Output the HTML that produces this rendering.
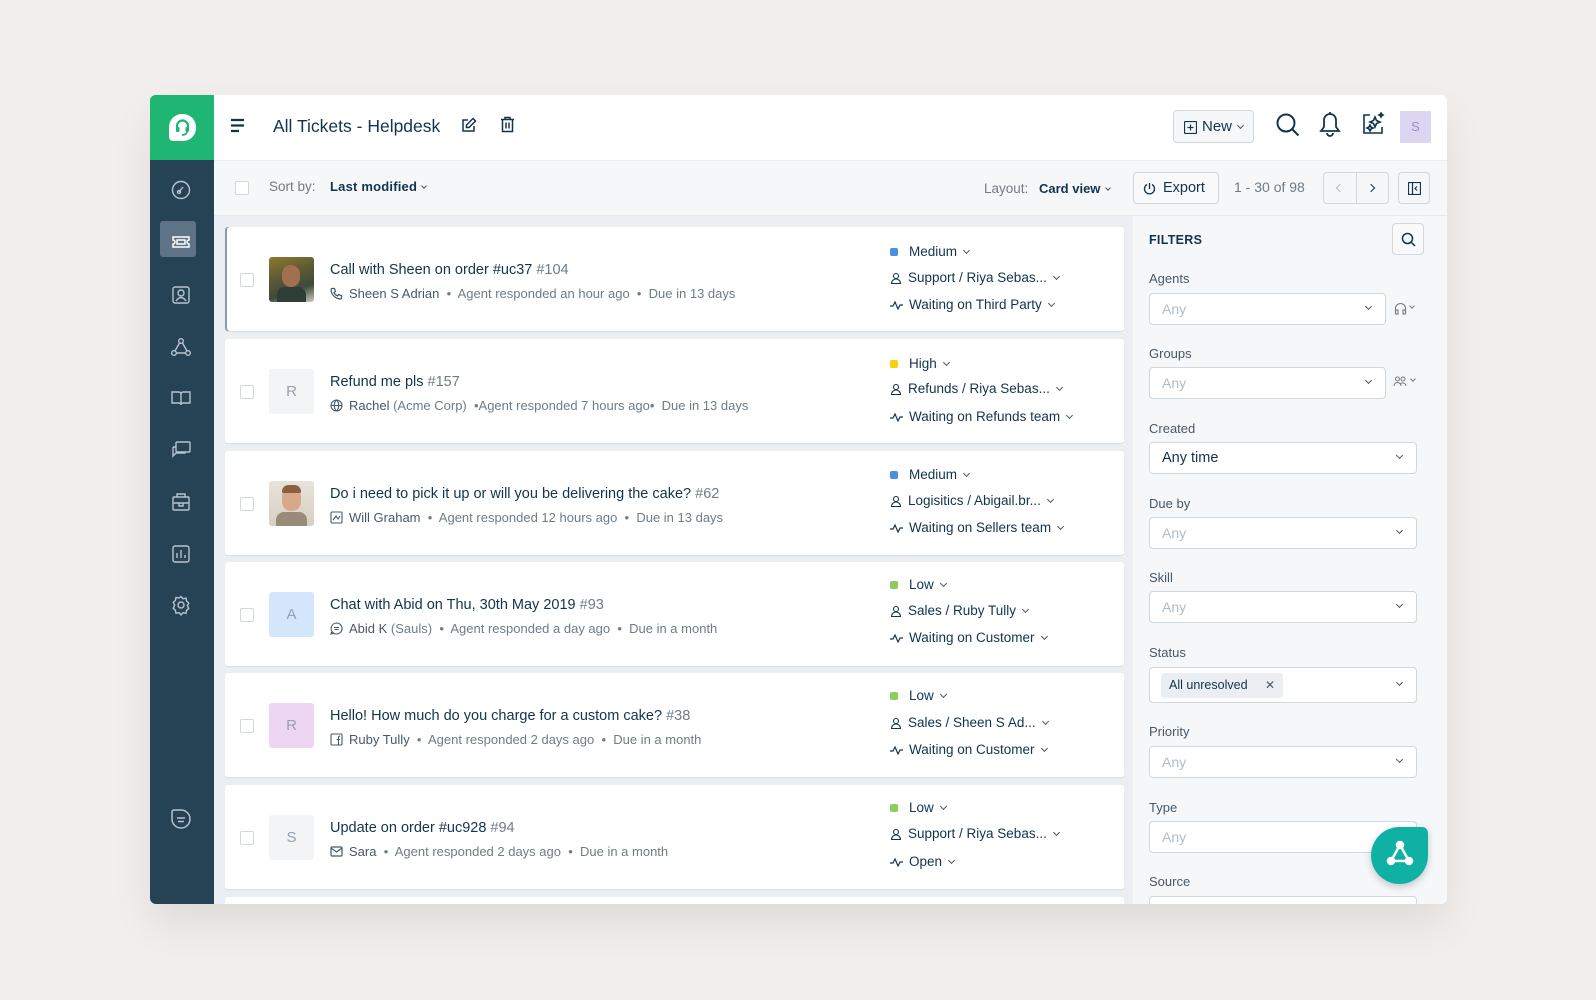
<!DOCTYPE html>
<html><head><meta charset="utf-8"><style>
*{box-sizing:border-box;margin:0;padding:0}
body{width:1596px;height:1000px;background:#f1eeeb;font-family:"Liberation Sans",sans-serif;position:relative;overflow:hidden;color:#12344d}
.abs{position:absolute}
#app{position:absolute;left:150px;top:95px;width:1297px;height:809px;background:#fff;border-radius:6px;overflow:hidden;box-shadow:0 20px 40px rgba(0,0,0,.08)}
.side{position:absolute;left:0;top:0;width:64px;height:809px;background:#264356}
.logo{position:absolute;left:0;top:0;width:64px;height:65px;background:#1fb572}
.si{position:absolute;left:20px;width:22px;height:22px}
.tb{position:absolute;left:64px;top:65px;right:0;height:56px;background:#f5f7f9;border-bottom:1px solid #e4e9ee;border-top:1px solid #ebeff3}
.list{position:absolute;left:64px;top:121px;width:919px;bottom:0;background:#ebeff3}
.card{position:absolute;left:11px;width:899px;height:104px;background:#fff;border-radius:3px;box-shadow:0 1px 1px rgba(0,0,0,.08)}
.cb{position:absolute;left:15px;top:46px;width:14px;height:14px;border:1px solid #cfd7df;border-radius:2px;background:#fff}
.av{position:absolute;left:44px;top:30px;width:45px;height:45px;border-radius:3px;font-size:15px;color:#92a2b1;text-align:center;line-height:45px;overflow:hidden}
.tt{position:absolute;left:105px;top:35px;font-size:14.5px;color:#12344d;white-space:nowrap}
.tt span{color:#6f7c87}
.mt{position:absolute;left:105px;top:59px;font-size:13px;color:#6f7c87;white-space:nowrap}
.mt b{font-weight:normal;color:#475867}
.mt svg{vertical-align:-2px;margin-right:6px}
.rc{position:absolute;left:676px;font-size:13.5px;color:#12344d;white-space:nowrap}
.dot{display:inline-block;width:8px;height:8px;border-radius:2px;margin-right:11px}
.chev{display:inline-block;width:5px;height:5px;border-right:1.3px solid #475867;border-bottom:1.3px solid #475867;transform:rotate(45deg);margin-left:7px;vertical-align:3px}
.rc svg{vertical-align:-2px;margin-right:6px}
.fp{position:absolute;left:983px;top:121px;right:0;bottom:0;background:#f5f7f9}
.lab{position:absolute;left:16px;font-size:13px;color:#475867}
.inp{position:absolute;left:16px;width:268px;height:32px;background:#fff;border:1px solid #cfd7df;border-radius:4px;font-size:14px;color:#b0bbc5;padding-left:12px;line-height:30px}
.inp .chev{position:absolute;right:14px;top:10px;margin:0}
.btn{position:absolute;background:#f5f7f9;border:1px solid #cfd7df;border-radius:4px}
</style></head><body>
<div id="app">
<div class="side">
 <div class="logo"><div class="abs" style="left:19px;top:19px;width:27px;height:27px;background:#fff;border-radius:13px 13px 13px 4px"></div>
 <svg class="abs" style="left:23px;top:22px" width="19" height="20" viewBox="0 0 19 20"><path d="M4 12V9a5.5 5.5 0 0 1 11 0v3" fill="none" stroke="#1fb572" stroke-width="2.2"/><rect x="3" y="10" width="3.5" height="5" rx="1" fill="#1fb572"/><rect x="12.5" y="10" width="3.5" height="5" rx="1" fill="#1fb572"/><path d="M14 15q-1 3-5 3" fill="none" stroke="#1fb572" stroke-width="1.8"/></svg></div>
 <div class="abs" style="left:10px;top:126px;width:36px;height:36px;background:#5e7385;border-radius:3px"></div>
 <svg class="si" style="top:84px" viewBox="0 0 22 22" fill="none" stroke="#b7c3cd" stroke-width="1.4"><circle cx="11" cy="11" r="8.5"/><path d="M9 13l4-5"/><circle cx="9" cy="13" r="1.5"/></svg>
 <svg class="si" style="top:136px" viewBox="0 0 22 22" fill="none" stroke="#fff" stroke-width="1.5"><path d="M3 6h16v3a2 2 0 0 0 0 4v3H3v-3a2 2 0 0 0 0-4z"/><rect x="7" y="9" width="8" height="4"/></svg>
 <svg class="si" style="top:189px" viewBox="0 0 22 22" fill="none" stroke="#b7c3cd" stroke-width="1.4"><rect x="3" y="3" width="16" height="16" rx="2"/><circle cx="11" cy="9" r="3"/><path d="M6 17q5-7 10 0"/></svg>
 <svg class="si" style="top:241px" viewBox="0 0 22 22" fill="none" stroke="#b7c3cd" stroke-width="1.4"><circle cx="11" cy="5" r="2.3"/><circle cx="4" cy="17" r="2.3"/><circle cx="18" cy="17" r="2.3"/><path d="M9.5 7L5 15M12.5 7L17 15M6.5 17h9"/></svg>
 <svg class="si" style="top:292px" viewBox="0 0 22 22" fill="none" stroke="#b7c3cd" stroke-width="1.4"><path d="M2 5h7a2 2 0 0 1 2 2v11a2 2 0 0 0-2-2H2zM20 5h-7a2 2 0 0 0-2 2v11a2 2 0 0 1 2-2h7z"/></svg>
 <svg class="si" style="top:344px" viewBox="0 0 22 22" fill="none" stroke="#b7c3cd" stroke-width="1.4"><rect x="6" y="3" width="14" height="10" rx="1"/><path d="M3 8h3M3 8v9l3-3h9v-1"/></svg>
 <svg class="si" style="top:396px" viewBox="0 0 22 22" fill="none" stroke="#b7c3cd" stroke-width="1.4"><rect x="3" y="6" width="16" height="13" rx="1"/><path d="M7 6V3h8v3M3 12h16M9 12v3h4v-3"/></svg>
 <svg class="si" style="top:448px" viewBox="0 0 22 22" fill="none" stroke="#b7c3cd" stroke-width="1.4"><rect x="3" y="3" width="16" height="16" rx="2"/><path d="M7 15V10M11 15V7M15 15v-3"/></svg>
 <svg class="si" style="top:499px" viewBox="0 0 22 22" fill="none" stroke="#b7c3cd" stroke-width="1.4"><circle cx="11" cy="11" r="3"/><path d="M11 2.5l2 2.2 3-.6.6 3 2.2 2-1.5 2.6 1.5 2.6-2.2 2-.6 3-3-.6-2 2.2-2-2.2-3 .6-.6-3-2.2-2L4.7 11 3.2 8.4l2.2-2 .6-3 3 .6z"/></svg>
 <svg class="si" style="top:713px" viewBox="0 0 22 22" fill="none" stroke="#b7c3cd" stroke-width="1.5"><path d="M11 2a9 9 0 1 1-9 9V4a2 2 0 0 1 2-2z"/><path d="M7 10h8M8 13.5h6"/></svg>
</div>
<svg class="abs" style="left:80px;top:23px" width="16" height="16" viewBox="0 0 16 16" stroke="#12344d" stroke-width="2.2"><path d="M1 2h13M1 7.5h13M1 13h8"/></svg>
<div class="abs" style="left:123px;top:21px;font-size:17.5px;color:#12344d">All Tickets - Helpdesk</div>
<svg class="abs" style="left:311px;top:22px" width="16" height="16" viewBox="0 0 16 16" fill="none" stroke="#12344d" stroke-width="1.5"><path d="M13 9v5H2V3h5"/><path d="M12 1.5l2.5 2.5L8 10.5H5.5V8z"/></svg>
<svg class="abs" style="left:350px;top:21px" width="15" height="17" viewBox="0 0 15 17" fill="none" stroke="#12344d" stroke-width="1.5"><path d="M1 3.5h13M5 3.5V1.5h5v2M2.5 3.5v12h10v-12M6 6.5v6M9 6.5v6"/></svg>
<div class="btn" style="left:1023px;top:15px;width:81px;height:33px;background:#f5f7f9"><svg class="abs" style="left:10px;top:10px" width="13" height="13" viewBox="0 0 13 13" fill="none" stroke="#12344d" stroke-width="1.2"><rect x=".5" y=".5" width="12" height="12" rx="1"/><path d="M6.5 3.5v6M3.5 6.5h6"/></svg><span class="abs" style="left:28px;top:7px;font-size:15px">New</span><span class="chev abs" style="left:57px;top:12px"></span></div>
<svg class="abs" style="left:1125px;top:17px" width="26" height="26" viewBox="0 0 26 26" fill="none" stroke="#12344d" stroke-width="2"><circle cx="11" cy="11" r="8.5"/><path d="M17.5 17.5l6 6"/></svg>
<svg class="abs" style="left:1169px;top:16px" width="22" height="28" viewBox="0 0 22 28" fill="none" stroke="#12344d" stroke-width="1.8"><path d="M11 3a6 6 0 0 1 6 6v7l3 4H2l3-4V9a6 6 0 0 1 6-6zM8 22a3 3 0 0 0 6 0M11 1v2"/></svg>
<svg class="abs" style="left:1211px;top:17px" width="24" height="24" viewBox="0 0 24 24" fill="none" stroke="#12344d" stroke-width="1.6"><path d="M9 3H3v18h18v-6"/><path d="M14 5l1.5 3.5L19 10l-3.5 1.5L14 15l-1.5-3.5L9 10l3.5-1.5zM9 13l1 2 2 1-2 1-1 2-1-2-2-1 2-1zM20 1l.7 1.3L22 3l-1.3.7L20 5l-.7-1.3L18 3l1.3-.7z"/></svg>
<div class="abs" style="left:1250px;top:16px;width:31px;height:32px;background:#ddd6f3;color:#9a8fc3;font-size:13px;text-align:center;line-height:32px">S</div>
<div class="tb">
 <div class="abs" style="left:21px;top:20px;width:14px;height:14px;border:1px solid #cfd7df;background:#fff;border-radius:2px"></div>
 <div class="abs" style="left:55px;top:18px;font-size:13.5px;color:#6f7c87">Sort by:</div>
 <div class="abs" style="left:116px;top:18px;font-size:13px;color:#12344d;font-weight:bold;letter-spacing:.2px">Last modified<span class="chev" style="margin-left:5px;width:4px;height:4px"></span></div>
 <div class="abs" style="left:770px;top:20px;font-size:13.5px;color:#6f7c87">Layout:</div>
 <div class="abs" style="left:825px;top:20px;font-size:13px;color:#12344d;font-weight:bold">Card view<span class="chev" style="margin-left:6px;width:4px;height:4px"></span></div>
 <div class="btn" style="left:919px;top:11px;width:86px;height:32px;background:#f7f9fa"><svg class="abs" style="left:9px;top:9px" width="13" height="13" viewBox="0 0 13 13" fill="none" stroke="#12344d" stroke-width="1.3"><path d="M4 2.5a5 5 0 1 0 5 0M6.5 1v6"/></svg><span class="abs" style="left:29px;top:7px;font-size:14.5px">Export</span></div>
 <div class="abs" style="left:1020px;top:18px;font-size:14px;color:#6f7c87">1 - 30 of 98</div>
 <div class="btn" style="left:1109px;top:11px;width:66px;height:32px;background:#f5f7f9"><div class="abs" style="left:32px;top:0;width:1px;height:30px;background:#cfd7df"></div><span class="abs" style="left:13px;top:12px;width:6px;height:6px;border-left:1.3px solid #b0bbc5;border-bottom:1.3px solid #b0bbc5;transform:rotate(45deg)"></span><span class="abs" style="left:44px;top:12px;width:6px;height:6px;border-right:1.6px solid #12344d;border-top:1.6px solid #12344d;transform:rotate(45deg)"></span></div>
 <div class="btn" style="left:1184px;top:11px;width:32px;height:32px"><svg class="abs" style="left:9px;top:9px" width="13" height="13" viewBox="0 0 13 13" fill="none" stroke="#12344d" stroke-width="1.2"><rect x=".5" y=".5" width="12" height="12"/><path d="M4.5 .5v12M9 4.5l-2 2 2 2"/></svg></div>
</div>
<div class="list">
 <div class="card" style="top:11px;box-shadow:inset 2px 0 0 #8a9bab,0 1px 1px rgba(0,0,0,.08)">
  <div class="cb"></div><div class="av" style="background:linear-gradient(160deg,#8d7a2e,#5c5a35 40%,#3e4a3a 70%,#cfc9c0)"><div class="abs" style="left:13px;top:8px;width:18px;height:22px;border-radius:9px;background:#a2704f"></div><div class="abs" style="left:8px;top:30px;width:29px;height:15px;background:#2f3d37;border-radius:8px 8px 0 0"></div></div>
  <div class="tt">Call with Sheen on order #uc37 <span>#104</span></div>
  <div class="mt"><svg width="13" height="13" viewBox="0 0 13 13" fill="none" stroke="#475867" stroke-width="1.2"><path d="M2 1.5h2.5l1 3-1.5 1a7 7 0 0 0 3.5 3.5l1-1.5 3 1V11a1 1 0 0 1-1 1A10 10 0 0 1 1 2.5a1 1 0 0 1 1-1z"/></svg><b>Sheen S Adrian</b> &nbsp;•&nbsp; Agent responded an hour ago &nbsp;•&nbsp; Due in 13 days</div>
 </div>
 <div class="card" style="top:123px">
  <div class="cb"></div><div class="av" style="background:#f3f4f5">R</div>
  <div class="tt">Refund me pls <span>#157</span></div>
  <div class="mt"><svg width="13" height="13" viewBox="0 0 13 13" fill="none" stroke="#475867" stroke-width="1.1"><circle cx="6.5" cy="6.5" r="5.5"/><path d="M1 6.5h11M6.5 1c-3 3-3 8 0 11M6.5 1c3 3 3 8 0 11"/></svg><b>Rachel</b> (Acme Corp) &nbsp;•Agent responded 7 hours ago• &nbsp;Due in 13 days</div>
 </div>
 <div class="card" style="top:235px">
  <div class="cb"></div><div class="av" style="background:linear-gradient(180deg,#e8e2da,#d8cfc4)"><div class="abs" style="left:13px;top:6px;width:19px;height:24px;border-radius:9px;background:#d9a88a"></div><div class="abs" style="left:13px;top:4px;width:19px;height:8px;border-radius:9px 9px 2px 2px;background:#8a6040"></div><div class="abs" style="left:7px;top:31px;width:31px;height:14px;background:#9a8a78;border-radius:8px 8px 0 0"></div></div>
  <div class="tt">Do i need to pick it up or will you be delivering the cake? <span>#62</span></div>
  <div class="mt"><svg width="13" height="13" viewBox="0 0 13 13" fill="none" stroke="#475867" stroke-width="1.1"><rect x="1" y="1" width="11" height="11" rx="1"/><path d="M3 9l3-4 2 3 2-3"/></svg><b>Will Graham</b> &nbsp;•&nbsp; Agent responded 12 hours ago &nbsp;•&nbsp; Due in 13 days</div>
 </div>
 <div class="card" style="top:346px">
  <div class="cb"></div><div class="av" style="background:#d4e6fb">A</div>
  <div class="tt">Chat with Abid on Thu, 30th May 2019 <span>#93</span></div>
  <div class="mt"><svg width="13" height="13" viewBox="0 0 13 13" fill="none" stroke="#475867" stroke-width="1.1"><path d="M6.5 1a5.5 5.5 0 1 1-4.6 8.5L1 12l2.5-1A5.5 5.5 0 0 1 6.5 1z"/><path d="M4 5.5h5M4.5 7.5h4"/></svg><b>Abid K</b> (Sauls) &nbsp;•&nbsp; Agent responded a day ago &nbsp;•&nbsp; Due in a month</div>
 </div>
 <div class="card" style="top:457px">
  <div class="cb"></div><div class="av" style="background:#ecd6f3">R</div>
  <div class="tt">Hello! How much do you charge for a custom cake? <span>#38</span></div>
  <div class="mt"><svg width="13" height="13" viewBox="0 0 13 13" fill="none" stroke="#475867" stroke-width="1.1"><rect x="1" y="1" width="11" height="11" rx="1"/><path d="M8.5 12V6.5h-2M8.5 4.5a1.5 1.5 0 0 1 1.5-1.5M8.5 4.5V6.5h1.5"/></svg><b>Ruby Tully</b> &nbsp;•&nbsp; Agent responded 2 days ago &nbsp;•&nbsp; Due in a month</div>
 </div>
 <div class="card" style="top:569px">
  <div class="cb"></div><div class="av" style="background:#f3f4f5">S</div>
  <div class="tt">Update on order #uc928 <span>#94</span></div>
  <div class="mt"><svg width="13" height="13" viewBox="0 0 13 13" fill="none" stroke="#475867" stroke-width="1.2"><rect x="1" y="2" width="11" height="9" rx="1"/><path d="M1 3l5.5 4L12 3"/></svg><b>Sara</b> &nbsp;•&nbsp; Agent responded 2 days ago &nbsp;•&nbsp; Due in a month</div>
 </div>
 <div class="card" style="top:681px"></div>
</div>
<div class="abs" style="left:64px;top:132px;width:919px;height:688px;pointer-events:none">
 <div class="rc" style="top:17px"><span class="dot" style="background:#4a90e2"></span>Medium<span class="chev"></span></div>
 <div class="rc" style="top:43px"><svg width="12" height="12" viewBox="0 0 12 12" fill="none" stroke="#12344d" stroke-width="1.1"><circle cx="6" cy="4" r="2.5"/><path d="M1.5 11.5a4.5 4.5 0 0 1 9 0z"/></svg>Support / Riya Sebas...<span class="chev"></span></div>
 <div class="rc" style="top:70px"><svg width="13" height="12" viewBox="0 0 13 12" fill="none" stroke="#12344d" stroke-width="1.2"><path d="M0 7h3l2-4 3 7 2-4h3"/></svg>Waiting on Third Party<span class="chev"></span></div>
 <div class="rc" style="top:129px"><span class="dot" style="background:#f5d10a"></span>High<span class="chev"></span></div>
 <div class="rc" style="top:154px"><svg width="12" height="12" viewBox="0 0 12 12" fill="none" stroke="#12344d" stroke-width="1.1"><circle cx="6" cy="4" r="2.5"/><path d="M1.5 11.5a4.5 4.5 0 0 1 9 0z"/></svg>Refunds / Riya Sebas...<span class="chev"></span></div>
 <div class="rc" style="top:182px"><svg width="13" height="12" viewBox="0 0 13 12" fill="none" stroke="#12344d" stroke-width="1.2"><path d="M0 7h3l2-4 3 7 2-4h3"/></svg>Waiting on Refunds team<span class="chev"></span></div>
 <div class="rc" style="top:240px"><span class="dot" style="background:#4a90e2"></span>Medium<span class="chev"></span></div>
 <div class="rc" style="top:266px"><svg width="12" height="12" viewBox="0 0 12 12" fill="none" stroke="#12344d" stroke-width="1.1"><circle cx="6" cy="4" r="2.5"/><path d="M1.5 11.5a4.5 4.5 0 0 1 9 0z"/></svg>Logisitics / Abigail.br...<span class="chev"></span></div>
 <div class="rc" style="top:293px"><svg width="13" height="12" viewBox="0 0 13 12" fill="none" stroke="#12344d" stroke-width="1.2"><path d="M0 7h3l2-4 3 7 2-4h3"/></svg>Waiting on Sellers team<span class="chev"></span></div>
 <div class="rc" style="top:350px"><span class="dot" style="background:#8ccc5c"></span>Low<span class="chev"></span></div>
 <div class="rc" style="top:376px"><svg width="12" height="12" viewBox="0 0 12 12" fill="none" stroke="#12344d" stroke-width="1.1"><circle cx="6" cy="4" r="2.5"/><path d="M1.5 11.5a4.5 4.5 0 0 1 9 0z"/></svg>Sales / Ruby Tully<span class="chev"></span></div>
 <div class="rc" style="top:403px"><svg width="13" height="12" viewBox="0 0 13 12" fill="none" stroke="#12344d" stroke-width="1.2"><path d="M0 7h3l2-4 3 7 2-4h3"/></svg>Waiting on Customer<span class="chev"></span></div>
 <div class="rc" style="top:461px"><span class="dot" style="background:#8ccc5c"></span>Low<span class="chev"></span></div>
 <div class="rc" style="top:488px"><svg width="12" height="12" viewBox="0 0 12 12" fill="none" stroke="#12344d" stroke-width="1.1"><circle cx="6" cy="4" r="2.5"/><path d="M1.5 11.5a4.5 4.5 0 0 1 9 0z"/></svg>Sales / Sheen S Ad...<span class="chev"></span></div>
 <div class="rc" style="top:515px"><svg width="13" height="12" viewBox="0 0 13 12" fill="none" stroke="#12344d" stroke-width="1.2"><path d="M0 7h3l2-4 3 7 2-4h3"/></svg>Waiting on Customer<span class="chev"></span></div>
 <div class="rc" style="top:573px"><span class="dot" style="background:#8ccc5c"></span>Low<span class="chev"></span></div>
 <div class="rc" style="top:599px"><svg width="12" height="12" viewBox="0 0 12 12" fill="none" stroke="#12344d" stroke-width="1.1"><circle cx="6" cy="4" r="2.5"/><path d="M1.5 11.5a4.5 4.5 0 0 1 9 0z"/></svg>Support / Riya Sebas...<span class="chev"></span></div>
 <div class="rc" style="top:627px"><svg width="13" height="12" viewBox="0 0 13 12" fill="none" stroke="#12344d" stroke-width="1.2"><path d="M0 7h3l2-4 3 7 2-4h3"/></svg>Open<span class="chev"></span></div>
</div>
<div class="fp"><div class="abs" style="left:0;top:5px;width:314px;height:700px">
 <div class="abs" style="left:16px;top:12px;font-size:12.5px;font-weight:bold;color:#12344d;letter-spacing:.3px">FILTERS</div>
 <div class="btn" style="left:259px;top:2px;width:32px;height:32px;background:#f7f9fa"><svg class="abs" style="left:8px;top:8px" width="15" height="15" viewBox="0 0 15 15" fill="none" stroke="#12344d" stroke-width="1.5"><circle cx="6.5" cy="6.5" r="5"/><path d="M10 10l4 4"/></svg></div>
 <div class="lab" style="top:50px">Agents</div>
 <div class="inp" style="top:72px;width:237px">Any<span class="chev"></span></div>
 <svg class="abs" style="left:261px;top:81px" width="13" height="13" viewBox="0 0 13 13" fill="none" stroke="#6f7c87" stroke-width="1.1"><path d="M1.5 10V6.5a5 5 0 0 1 10 0V10"/><rect x="1.5" y="8" width="2.5" height="4"/><rect x="9" y="8" width="2.5" height="4"/></svg><span class="chev abs" style="left:277px;top:83px;margin:0;width:4px;height:4px;border-color:#6f7c87"></span>
 <div class="lab" style="top:125px">Groups</div>
 <div class="inp" style="top:146px;width:237px">Any<span class="chev"></span></div>
 <svg class="abs" style="left:260px;top:155px" width="14" height="11" viewBox="0 0 14 11" fill="none" stroke="#6f7c87" stroke-width="1"><circle cx="4.5" cy="3" r="2"/><circle cx="10" cy="3" r="2"/><path d="M1 10a3.5 3.5 0 0 1 7 0M7 8a3.5 3.5 0 0 1 6 2"/></svg><span class="chev abs" style="left:278px;top:156px;margin:0;width:4px;height:4px;border-color:#6f7c87"></span>
 <div class="lab" style="top:200px">Created</div>
 <div class="inp" style="top:221px;color:#12344d;font-size:14.5px">Any time<span class="chev"></span></div>
 <div class="lab" style="top:275px">Due by</div>
 <div class="inp" style="top:296px">Any<span class="chev"></span></div>
 <div class="lab" style="top:349px">Skill</div>
 <div class="inp" style="top:370px">Any<span class="chev"></span></div>
 <div class="lab" style="top:424px">Status</div>
 <div class="inp" style="top:446px;height:36px"><div class="abs" style="left:11px;top:5px;width:122px;height:25px;background:#ebeff3;border-radius:3px;color:#12344d;font-size:12.5px;line-height:25px;padding-left:8px">All unresolved<span style="position:absolute;left:104px;font-size:12px;color:#475867">✕</span></div><span class="chev" style="top:12px"></span></div>
 <div class="lab" style="top:503px">Priority</div>
 <div class="inp" style="top:525px">Any<span class="chev"></span></div>
 <div class="lab" style="top:579px">Type</div>
 <div class="inp" style="top:600px">Any</div>
 <div class="lab" style="top:653px">Source</div>
 <div class="inp" style="top:675px"></div>
</div></div>
</div>
<div class="abs" style="left:1371px;top:827px;width:57px;height:57px;background:#0fb1a5;border-radius:29px 6px 29px 29px;box-shadow:0 3px 8px rgba(0,0,0,.2)"><svg class="abs" style="left:15px;top:13px" width="28" height="28" viewBox="0 0 28 28" fill="none" stroke="#fff" stroke-width="2.5"><path d="M14 5L5 21h18z"/><circle cx="14" cy="5" r="3" fill="#fff"/><circle cx="5" cy="21" r="3" fill="#fff"/><circle cx="23" cy="21" r="3" fill="#fff"/></svg></div>
</body></html>
